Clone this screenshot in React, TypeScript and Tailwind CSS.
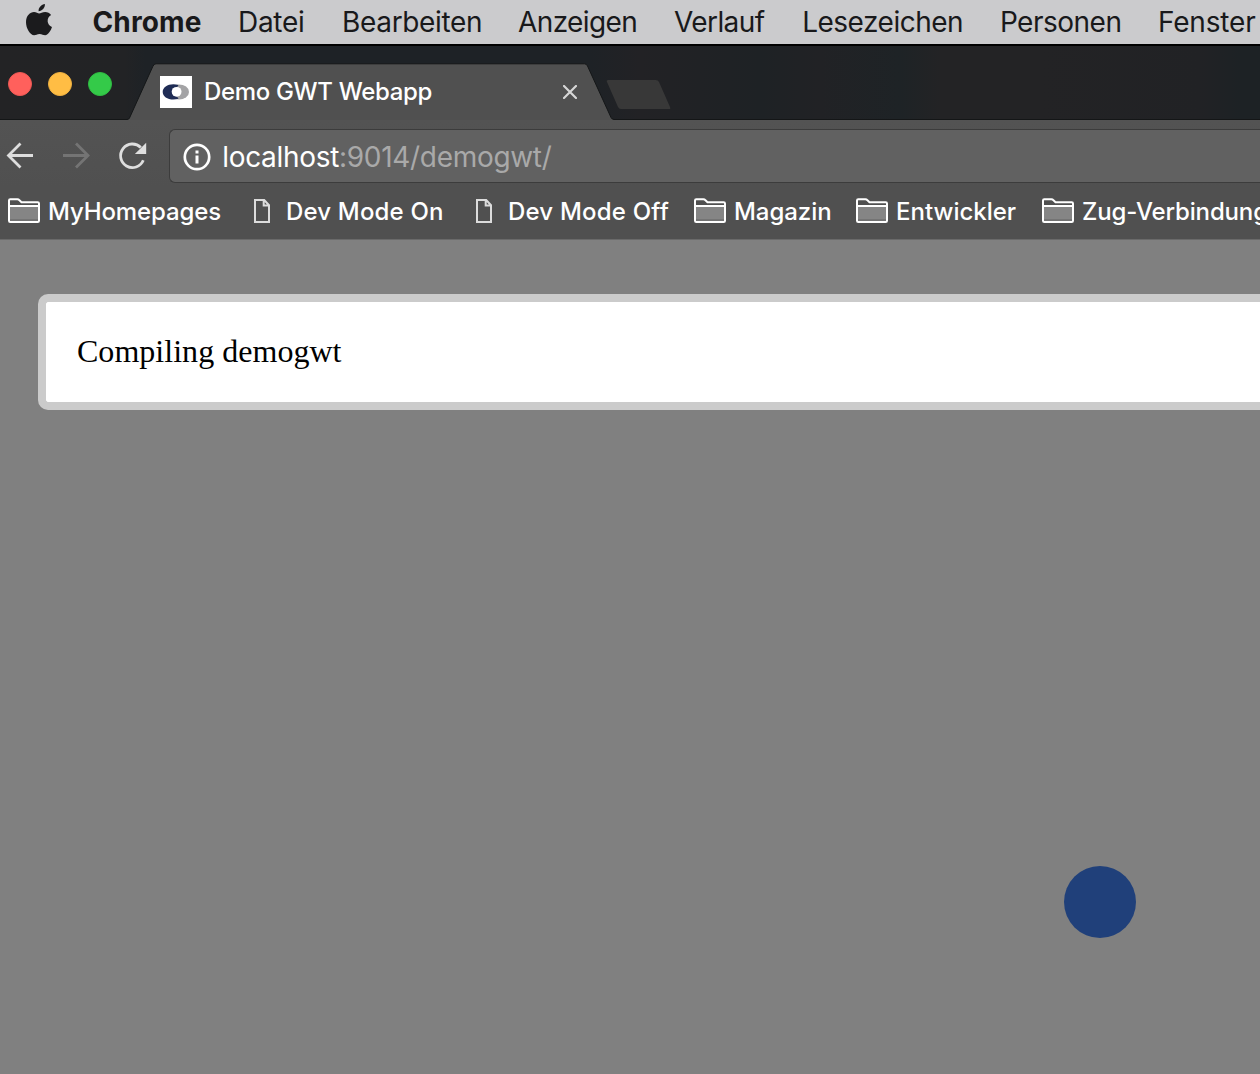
const menuItems = [
  { label: 'Chrome', style: 'w-[145.5px] font-bold tracking-[0.12px]' },
  { label: 'Datei', style: 'w-[104px] tracking-[-0.28px]' },
  { label: 'Bearbeiten', style: 'w-[176px] tracking-[-0.33px]' },
  { label: 'Anzeigen', style: 'w-[156px] tracking-[-0.6px]' },
  { label: 'Verlauf', style: 'w-[128.2px] tracking-[-0.6px]' },
  { label: 'Lesezeichen', style: 'w-[197.7px] tracking-[-0.5px]' },
  { label: 'Personen', style: 'w-[158px] tracking-[-0.5px]' },
  { label: 'Fenster', style: 'w-[102px] tracking-[-0.17px]' },
];

const bookmarks = [
  { label: 'MyHomepages', folder: true, style: 'w-[244px] gap-2 tracking-[-0.12px]' },
  { label: 'Dev Mode On', folder: false, style: 'w-[222px] gap-[14px] tracking-[0.17px]' },
  { label: 'Dev Mode Off', folder: false, style: 'w-[220px] gap-[14px] tracking-[0.2px]' },
  { label: 'Magazin', folder: true, style: 'w-[162px] gap-2 tracking-[-0.05px]' },
  { label: 'Entwickler', folder: true, style: 'w-[186px] gap-2 tracking-[0px]' },
  { label: 'Zug-Verbindungen', folder: true, style: 'w-[260px] gap-2 tracking-[-0.15px]' },
];

function MenuBar() {
  return (
    <nav className="flex h-[46px] shrink-0 border-b-2 border-black bg-[#cbcbcd] text-[28px] leading-[34px] text-[#19191b]">
      <div className="w-[92.5px] shrink-0 pl-[26px]">
        <svg viewBox="0 0 26 32" className="mt-1 h-8 w-[26px]" fill="#1b1b1d">
          <path d="M18.9 0c.3 3.6-2.8 7.2-6.3 7.2C12.2 3.600 15.500.400 18.900 0Z" />
          <path d="M13.100 9.400c1.500 0 3.300-1.500 6.100-1.500 2.300 0 4.600 1.200 5.900 3.100-5.100 3-4.300 10 .9 12-.8 2.600-3.600 8.300-6.900 8.300-2 0-3-1.300-5.500-1.300s-3.700 1.300-5.500 1.300C4.200 31.300 0 24.500 0 18.300 0 11.600 4.100 8 8 8c2.300 0 4 1.400 5.100 1.400Z" />
        </svg>
      </div>
      {menuItems.map((item) => (
        <span key={item.label} className={'shrink-0 pt-[5px] whitespace-nowrap ' + item.style}>
          {item.label}
        </span>
      ))}
    </nav>
  );
}

function TabStrip() {
  return (
    <div className="relative flex h-[74px] shrink-0 bg-[linear-gradient(90deg,#232325_0,#222325_125px,#1e2226_145px,#1e2226_590px,#222225_640px,#1e2225_760px,#212225_820px,#1e2326_900px,#232325_940px,#232325_1040px,#212225_1200px,#1d2225_1240px)]">
      <svg className="absolute inset-0 h-[74px] w-[1260px]" viewBox="0 0 1260 74">
        <path
          d="M0 73.500H127Q128.800 73.500 129.500 72L152.800 20.500Q154 17.800 156 17.800H584.500Q586.500 17.800 587.500 20L611 71.500Q612 73.500 614 73.500H1260V75H0Z"
          fill="#505050"
          stroke="#141617"
        />
        <path
          d="M608.500 34H655.500Q658 34 659 36L670 61Q671 63 669 63H621Q619 63 618 61L607 36Q606 34 608.500 34Z"
          fill="#383838"
        />
      </svg>
      <div className="relative flex gap-4 pt-[26px] pl-2">
        <span className="size-6 rounded-full border border-[#ee5854] bg-[#ff605c]" />
        <span className="size-6 rounded-full border border-[#eeb040] bg-[#ffbd44]" />
        <span className="size-6 rounded-full border border-[#2fbc42] bg-[#34ca49]" />
      </div>
      <div className="relative ml-12 flex h-full w-[417px] text-white">
        <svg viewBox="0 0 32 32" className="mt-[30px] size-8 shrink-0">
          <path fill="#fff" d="M0 0h32v32H0z" />
          <ellipse cx="19" cy="15.900" rx="10" ry="7.500" fill="#a3a3a5" />
          <path d="M18.500 9C10 6.500 2.700 10.500 2.700 15.900S10 25.300 18.500 22.800L14 16Z" fill="#1f2c55" />
          <circle cx="16.600" cy="15.800" r="4.900" fill="#fff" />
        </svg>
        <span className="ml-3 pt-8 text-2xl leading-7 font-medium tracking-[-0.33px] whitespace-nowrap">
          Demo GWT Webapp
        </span>
        <svg viewBox="0 0 14 14" className="mt-[39px] ml-auto size-3.5 shrink-0" stroke="#d6d6d6" strokeWidth="2.200" strokeLinecap="round">
          <path d="m1 1 12 12M13 1 1 13" />
        </svg>
      </div>
    </div>
  );
}

function Toolbar() {
  return (
    <div className="flex h-[66px] shrink-0 bg-gradient-to-b from-[#535353] to-[#505050] pt-[9px]">
      <svg viewBox="0 0 169 54" className="h-[54px] w-[169px] shrink-0" fill="none" strokeWidth="2.800">
        <path d="M33 26.500H8.500M20.500 14.500 8.500 26.500l12 12" stroke="#dedede" />
        <path d="M63 26.500H87.500M76 14.500l12 12-12 12" stroke="#747474" />
        <path d="M143.300 31.300A11.800 11.800 0 1 1 140.800 18.500" stroke="#dedede" />
        <path d="M146.200 13.700v11.300h-11.300z" fill="#dedede" />
      </svg>
      <div className="flex h-[54px] flex-1 rounded-l-md border border-r-0 border-[#3c3c3c] bg-[#616161] pt-2.5 pl-3 text-[28px] leading-[34px]">
        <svg viewBox="0 0 28 28" className="mt-[2.500px] ml-[0.500px] size-7 shrink-0" fill="none" stroke="#fff">
          <circle cx="14" cy="14" r="12.200" strokeWidth="2.700" />
          <path d="M14 12.500v8M14 7.500v3" strokeWidth="3" />
        </svg>
        <span className="ml-[11.700px] tracking-[-0.31px] whitespace-nowrap text-white">
          localhost<span className="text-[#a9a9a9]">:9014/demogwt/</span>
        </span>
      </div>
    </div>
  );
}

function FolderIcon() {
  return (
    <svg viewBox="0 0 32 26" className="h-[26px] w-8 shrink-0" strokeWidth="2" strokeLinejoin="round">
      <path d="M1 22.800V2.500Q1 1.200 2.300 1.200H9.500Q10.500 1.200 11.200 2L13.500 4.200H29.700Q31 4.200 31 5.500V22.800Q31 24 29.700 24H2.300Q1 24 1 22.800Z" fill="#505050" stroke="#fff" />
      <path d="M2 8H30V23H2Z" fill="#858585" />
      <path d="M2 21H30V23H2Z" fill="#747474" />
      <path d="M1 8H31" stroke="#fff" />
    </svg>
  );
}

function PageIcon() {
  return (
    <svg viewBox="0 0 20 26" className="h-[26px] w-5 shrink-0" fill="none" stroke="#dcdcdc" strokeWidth="2">
      <path d="M3 2H12.200L17 7.200V24H3ZM11.700 2V7.500H17" />
    </svg>
  );
}

function BookmarksBar() {
  return (
    <div className="flex h-[54px] shrink-0 overflow-hidden border-b border-[#6a6a6a] bg-[#505050] pt-3 pl-2 text-2xl leading-7 font-medium text-white">
      {bookmarks.map((item) => (
        <div key={item.label} className={'flex shrink-0 whitespace-nowrap ' + item.style}>
          {item.folder ? <FolderIcon /> : <PageIcon />}
          <span>{item.label}</span>
        </div>
      ))}
    </div>
  );
}

export default function App() {
  return (
    <div className="flex h-[1074px] w-[1260px] flex-col overflow-hidden bg-[#808080] font-[Inter,sans-serif]">
      <MenuBar />
      <TabStrip />
      <Toolbar />
      <BookmarksBar />
      <main className="flex flex-1 flex-col pt-[54px] pl-[38px]">
        <div className="h-[116px] rounded-l-[10px] border-8 border-r-0 border-[#cbcbcb] bg-white pt-[31px] pl-[31px] font-['Liberation_Serif',serif] text-[32px] leading-9 tracking-[0.03px] text-black">
          Compiling demogwt
        </div>
        <div className="mt-[456px] mr-[124px] size-[72px] self-end rounded-full bg-[#20407a]" />
      </main>
    </div>
  );
}
